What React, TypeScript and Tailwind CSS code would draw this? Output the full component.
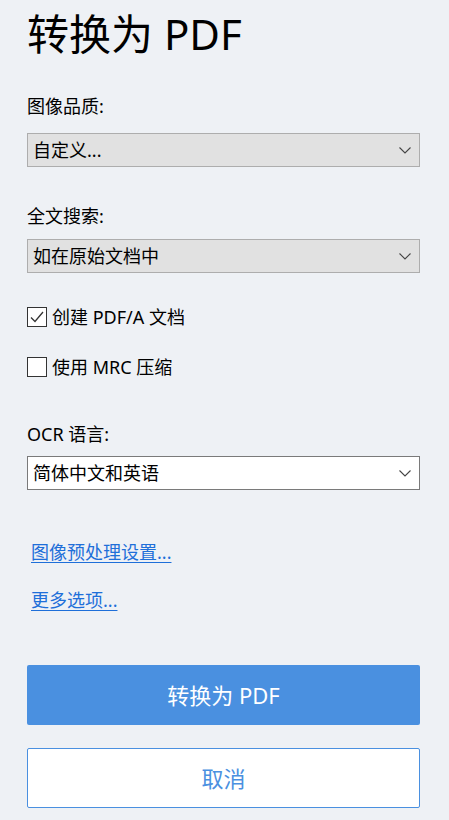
const font = { fontFamily: '"Noto Sans", "Noto Sans CJK SC", sans-serif' };

function Select({ value, white }: { value: string; white?: boolean }) {
  return (
    <div
      className={`flex h-[34px] w-[393px] items-center justify-between border pl-[5px] pr-[8px] ${
        white ? 'border-[#7a7a7a] bg-white' : 'border-[#adadad] bg-[#e1e1e1]'
      }`}
    >
      <span className="text-[18px] leading-[24px] text-black">{value}</span>
      <svg width="12" height="7" viewBox="0 0 12 7" className="text-[#444]">
        <path d="M0.5 0.5 L6 6 L11.5 0.5" fill="none" stroke="currentColor" strokeWidth="1.1" />
      </svg>
    </div>
  );
}

function Check({ checked, label }: { checked?: boolean; label: string }) {
  return (
    <label className="flex items-center gap-[5px]">
      <span className="flex h-[20px] w-[20px] items-center justify-center border border-[#333] bg-white">
        {checked && (
          <svg width="14" height="12" viewBox="0 0 14 12">
            <path d="M1 6.5 L5 10.5 L13 1" fill="none" stroke="#333" strokeWidth="1.3" />
          </svg>
        )}
      </span>
      <span className="text-[18px] leading-[24px] text-black">{label}</span>
    </label>
  );
}

export default function App() {
  return (
    <div className="min-h-screen w-full bg-[#eef1f5]" style={font}>
      <div className="flex flex-col px-[27px] pt-[10px]">
        <h1 className="text-[42px] leading-[48px] font-normal text-black">转换为 PDF</h1>

        <div className="mt-[36px] text-[18px] leading-[24px] text-black">图像品质:</div>
        <div className="mt-[15px]">
          <Select value="自定义..." />
        </div>

        <div className="mt-[37px] text-[18px] leading-[24px] text-black">全文搜索:</div>
        <div className="mt-[11px]">
          <Select value="如在原始文档中" />
        </div>

        <div className="mt-[32px]">
          <Check checked label="创建 PDF/A 文档" />
        </div>
        <div className="mt-[26px]">
          <Check label="使用 MRC 压缩" />
        </div>

        <div className="mt-[43px] text-[18px] leading-[24px] text-black">OCR 语言:</div>
        <div className="mt-[10px]">
          <Select value="简体中文和英语" white />
        </div>

        <div className="mt-[50px] flex flex-col items-start gap-[24px] pl-[4px]">
          <a className="text-[18px] leading-[24px] text-[#1e6fd9] underline underline-offset-[3px]" href="#">
            图像预处理设置...
          </a>
          <a className="text-[18px] leading-[24px] text-[#1e6fd9] underline underline-offset-[3px]" href="#">
            更多选项...
          </a>
        </div>

        <button className="mt-[53px] flex h-[60px] w-[393px] items-center justify-center rounded-[2px] bg-[#4a90e0] text-[22px] text-white">
          转换为 PDF
        </button>
        <button className="mt-[23px] flex h-[60px] w-[393px] items-center justify-center rounded-[2px] border border-[#4a90e0] bg-white text-[22px] text-[#4a90e0]">
          取消
        </button>
      </div>
    </div>
  );
}
